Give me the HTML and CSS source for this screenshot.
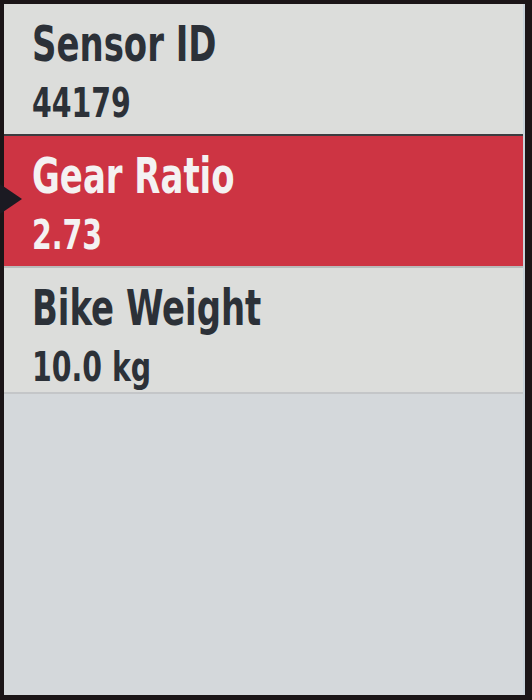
FILE: index.html
```html
<!DOCTYPE html>
<html>
<head>
<meta charset="utf-8">
<link rel="stylesheet" href="styles.css">
</head>
<body>
<div class="device">
  <div class="screen">
    <div class="item">
      <div class="title">Sensor ID</div>
      <div class="value">44179</div>
    </div>
    <div class="item selected">
      <span class="pointer"></span>
      <div class="title">Gear Ratio</div>
      <div class="value">2.73</div>
    </div>
    <div class="item last">
      <div class="title">Bike Weight</div>
      <div class="value">10.0 kg</div>
    </div>
    <div class="empty"></div>
  </div>
</div>
</body>
</html>
```
FILE: styles.css
```css
html, body {
  margin: 0;
  padding: 0;
  background: #1b1517;
}
.device {
  width: 532px;
  height: 700px;
  padding: 4px 7px 5px 4px;
  box-sizing: border-box;
  display: flex;
}
.screen {
  flex: 1;
  display: flex;
  flex-direction: column;
  background: #d5d9dc;
  font-family: "DejaVu Sans Condensed", "DejaVu Sans", sans-serif;
  font-weight: bold;
  color: #2c3138;
  border-right: 2px solid #c9d3da;
}
.item {
  position: relative;
  background: #dcdddb;
  padding: 15px 0 9px 28px;
  border-bottom: 2px solid #3c3c40;
}
.item.selected {
  background: #cd3443;
  color: #f4f2f2;
  border-bottom: 2px solid #b9bbbb;
  padding-bottom: 9px;
}
.item.last {
  border-bottom: 2px solid #c4c6c8;
  padding-bottom: 3px;
}
.title, .value {
  transform: scaleX(0.77);
  transform-origin: left center;
  white-space: nowrap;
}
.title {
  font-size: 49px;
  line-height: 52px;
}
.value {
  font-size: 41px;
  line-height: 44px;
  margin-top: 10px;
}
.pointer {
  position: absolute;
  left: -4px;
  top: 48px;
  width: 0;
  height: 0;
  border-left: 22px solid #1b1a22;
  border-top: 15px solid transparent;
  border-bottom: 15px solid transparent;
}
.empty {
  flex: 1;
  background: #d4d8db;
}
```
